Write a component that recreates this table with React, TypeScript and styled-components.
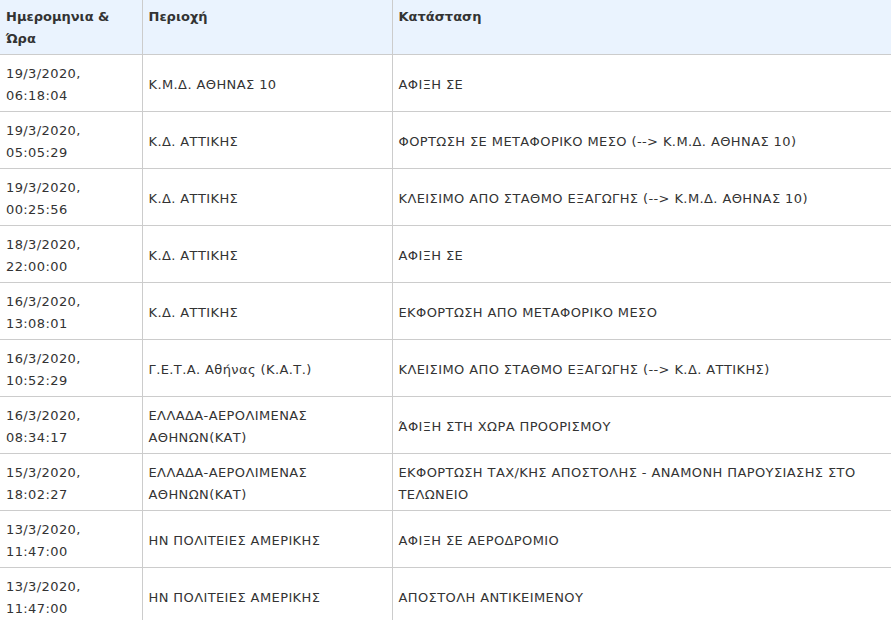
import React from "react";
import styled, { createGlobalStyle } from "styled-components";

const GlobalStyle = createGlobalStyle`
  html, body { margin: 0; padding: 0; background: #ffffff; }
  body { font-family: "DejaVu Sans", Verdana, sans-serif; color: #333333; }
`;

const Wrapper = styled.div`
  width: 891px;
  overflow: hidden;
`;

const Table = styled.table`
  width: 100%;
  border-collapse: collapse;
  table-layout: fixed;
  font-size: 13px;
  line-height: 22px;
  letter-spacing: 0.4px;
`;

const HeadCell = styled.th`
  background: #eaf3fe;
  color: #333333;
  font-weight: bold;
  letter-spacing: 0;
  text-align: left;
  vertical-align: top;
  padding: 6px 6px 4px;
  border-bottom: 1px solid #cccccc;
  & + & { border-left: 1px solid #cccccc; }
`;

const Cell = styled.td`
  text-align: left;
  vertical-align: middle;
  padding: 8px 6px 4px;
  border-bottom: 1px solid #cccccc;
  & + & { border-left: 1px solid #cccccc; }
`;

type Row = { date: string; time: string; area: string; status: string };

const rows: Row[] = [
  { date: "19/3/2020,", time: "06:18:04", area: "Κ.Μ.Δ. ΑΘΗΝΑΣ 10", status: "ΑΦΙΞΗ ΣΕ" },
  { date: "19/3/2020,", time: "05:05:29", area: "Κ.Δ. ΑΤΤΙΚΗΣ", status: "ΦΟΡΤΩΣΗ ΣΕ ΜΕΤΑΦΟΡΙΚΟ ΜΕΣΟ (--> Κ.Μ.Δ. ΑΘΗΝΑΣ 10)" },
  { date: "19/3/2020,", time: "00:25:56", area: "Κ.Δ. ΑΤΤΙΚΗΣ", status: "ΚΛΕΙΣΙΜΟ ΑΠΟ ΣΤΑΘΜΟ ΕΞΑΓΩΓΗΣ (--> Κ.Μ.Δ. ΑΘΗΝΑΣ 10)" },
  { date: "18/3/2020,", time: "22:00:00", area: "Κ.Δ. ΑΤΤΙΚΗΣ", status: "ΑΦΙΞΗ ΣΕ" },
  { date: "16/3/2020,", time: "13:08:01", area: "Κ.Δ. ΑΤΤΙΚΗΣ", status: "ΕΚΦΟΡΤΩΣΗ ΑΠΟ ΜΕΤΑΦΟΡΙΚΟ ΜΕΣΟ" },
  { date: "16/3/2020,", time: "10:52:29", area: "Γ.Ε.Τ.Α. Αθήνας (Κ.Α.Τ.)", status: "ΚΛΕΙΣΙΜΟ ΑΠΟ ΣΤΑΘΜΟ ΕΞΑΓΩΓΗΣ (--> Κ.Δ. ΑΤΤΙΚΗΣ)" },
  { date: "16/3/2020,", time: "08:34:17", area: "ΕΛΛΑΔΑ-ΑΕΡΟΛΙΜΕΝΑΣ ΑΘΗΝΩΝ(ΚΑΤ)", status: "ΆΦΙΞΗ ΣΤΗ ΧΩΡΑ ΠΡΟΟΡΙΣΜΟΥ" },
  { date: "15/3/2020,", time: "18:02:27", area: "ΕΛΛΑΔΑ-ΑΕΡΟΛΙΜΕΝΑΣ ΑΘΗΝΩΝ(ΚΑΤ)", status: "ΕΚΦΟΡΤΩΣΗ ΤΑΧ/ΚΗΣ ΑΠΟΣΤΟΛΗΣ - ΑΝΑΜΟΝΗ ΠΑΡΟΥΣΙΑΣΗΣ ΣΤΟ ΤΕΛΩΝΕΙΟ" },
  { date: "13/3/2020,", time: "11:47:00", area: "ΗΝ ΠΟΛΙΤΕΙΕΣ ΑΜΕΡΙΚΗΣ", status: "ΑΦΙΞΗ ΣΕ ΑΕΡΟΔΡΟΜΙΟ" },
  { date: "13/3/2020,", time: "11:47:00", area: "ΗΝ ΠΟΛΙΤΕΙΕΣ ΑΜΕΡΙΚΗΣ", status: "ΑΠΟΣΤΟΛΗ ΑΝΤΙΚΕΙΜΕΝΟΥ" },
];

export default function App() {
  return (
    <>
      <GlobalStyle />
      <Wrapper>
        <Table>
          <colgroup>
            <col style={{ width: 142 }} />
            <col style={{ width: 250 }} />
            <col />
          </colgroup>
          <thead>
            <tr>
              <HeadCell>Ημερομηνια &amp; Ώρα</HeadCell>
              <HeadCell>Περιοχή</HeadCell>
              <HeadCell>Κατάσταση</HeadCell>
            </tr>
          </thead>
          <tbody>
            {rows.map((r, i) => (
              <tr key={i}>
                <Cell>
                  {r.date}
                  <br />
                  {r.time}
                </Cell>
                <Cell>{r.area}</Cell>
                <Cell>{r.status}</Cell>
              </tr>
            ))}
          </tbody>
        </Table>
      </Wrapper>
    </>
  );
}
